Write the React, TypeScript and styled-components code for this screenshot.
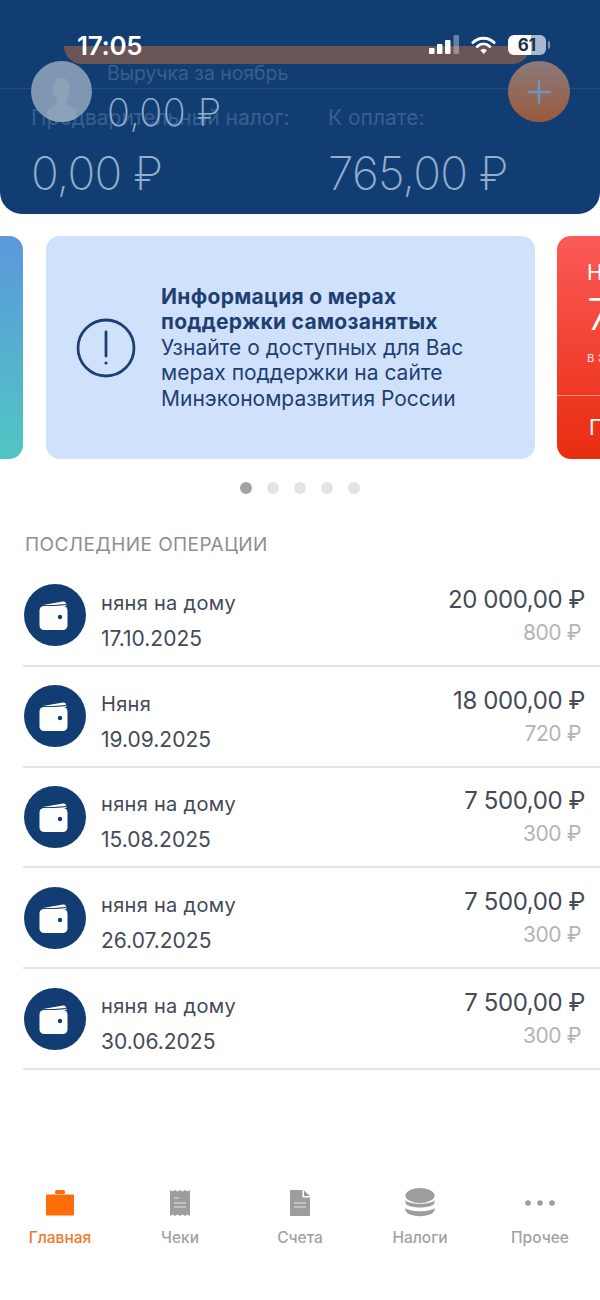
import styled, { createGlobalStyle } from "styled-components";

const GlobalStyle = createGlobalStyle`
  html, body {
    margin: 0;
    padding: 0;
    background: #fff;
    font-family: Inter, "Noto Sans", "DejaVu Sans", sans-serif;
  }
  * { box-sizing: border-box; }
`;

const Screen = styled.div`
  width: 600px;
  height: 1300px;
  display: flex;
  flex-direction: column;
  overflow: hidden;
  background: #fff;
`;

const Header = styled.header`
  position: relative;
  height: 214px;
  flex: none;
  padding: 105px 0 0 31px;
  display: grid;
  grid-template-columns: 297px 1fr;
  background: #123d73;
  border-radius: 0 0 22px 22px;
  overflow: hidden;
`;

const SummaryLabel = styled.div`
  font-size: 21px;
  line-height: 26px;
  color: #37608e;
  white-space: nowrap;
`;

const SummaryValue = styled.div`
  margin-top: 14px;
  font-size: 46px;
  line-height: 56px;
  font-weight: 200;
  letter-spacing: -0.8px;
  color: #93adcd;
  white-space: nowrap;
`;

/* island of the phone, showing through the collapsing header */
const IslandShade = styled.div`
  position: absolute;
  left: 64px;
  top: 46px;
  width: 466px;
  height: 18px;
  background: #6a5557;
  border-radius: 0 0 20px 20px;
`;

const Hairline = styled.div`
  position: absolute;
  left: 0;
  right: 0;
  top: 88px;
  height: 1px;
  background: rgba(255, 255, 255, 0.08);
`;

const StatusBar = styled.div`
  position: absolute;
  left: 77px;
  right: 54px;
  top: 30px;
  height: 30px;
  display: flex;
  align-items: center;
  justify-content: space-between;
`;

const Clock = styled.span`
  font-size: 26px;
  font-weight: 600;
  letter-spacing: -0.3px;
  color: #fff;
`;

const StatusIcons = styled.div`
  display: flex;
  align-items: center;
  gap: 12px;
`;

const Battery = styled.div`
  position: relative;
  width: 38px;
  height: 20px;
  border-radius: 6px;
  background: linear-gradient(90deg, #fff 0 61%, #a9b8cf 61% 100%);
  color: #1f2d44;
  font-size: 17px;
  font-weight: 700;
  line-height: 20px;
  text-align: center;

  &::after {
    content: "";
    position: absolute;
    right: -4px;
    top: 6px;
    width: 2px;
    height: 8px;
    border-radius: 0 2px 2px 0;
    background: #7f93ae;
  }
`;

const Avatar = styled.div`
  position: absolute;
  left: 31px;
  top: 61px;
  width: 61px;
  height: 61px;
  border-radius: 50%;
  background: #7f97b2;
  overflow: hidden;
`;

const EarningsBlock = styled.div`
  position: absolute;
  left: 107px;
  top: 60px;
`;

const EarningsLabel = styled.div`
  font-size: 19.4px;
  line-height: 26px;
  color: #37608e;
  white-space: nowrap;
`;

const EarningsValue = styled.div`
  margin-top: 2px;
  font-size: 38px;
  line-height: 48px;
  font-weight: 200;
  letter-spacing: 0.4px;
  color: #93adcd;
  white-space: nowrap;
`;

const AddButton = styled.div`
  position: absolute;
  left: 508px;
  top: 61px;
  width: 62px;
  height: 61px;
  border-radius: 50%;
  background: linear-gradient(180deg, #8a7a7c 0%, #9a5a3b 100%);
  display: flex;
  align-items: center;
  justify-content: center;
`;

const Carousel = styled.section`
  flex: none;
  margin-top: 22px;
  height: 223px;
  display: flex;
  gap: 23px;
`;

const LeftPeek = styled.div`
  width: 23px;
  flex: none;
  border-radius: 0 14px 14px 0;
  background: linear-gradient(180deg, #5b98dc 0%, #4fc6c3 100%);
`;

const InfoCard = styled.div`
  width: 489px;
  flex: none;
  margin-right: -1px;
  display: flex;
  align-items: center;
  gap: 25px;
  padding-left: 30px;
  border-radius: 14px;
  background: #d0e2fb;
`;

const InfoText = styled.div`
  font-size: 21px;
  line-height: 25.5px;
  color: #1f3f73;
  white-space: nowrap;
`;

const InfoTitle = styled.div`
  font-weight: 700;
  letter-spacing: 0.3px;
`;

const RightPeek = styled.div`
  flex: 1;
  min-width: 0;
  display: flex;
  flex-direction: column;
  padding-left: 30px;
  border-radius: 14px 0 0 14px;
  overflow: hidden;
  background: linear-gradient(180deg, #fb5a57 0%, #e92c10 100%);
  color: #fff;
  white-space: nowrap;
`;

const PeekTitle = styled.div`
  margin-top: 24px;
  font-size: 21px;
  line-height: 26px;
`;

const PeekAmount = styled.div`
  margin-top: 1px;
  font-size: 44px;
  line-height: 54px;
  font-weight: 300;
`;

const PeekNote = styled.div`
  margin-top: 7px;
  font-size: 13px;
  line-height: 18px;
  opacity: 0.85;
`;

const PeekAction = styled.div`
  margin: 29px 0 0 -30px;
  padding: 19px 0 0 32px;
  border-top: 1px solid rgba(255, 255, 255, 0.4);
  font-size: 21px;
  line-height: 26px;
`;

const Dots = styled.div`
  flex: none;
  margin-top: 23px;
  display: flex;
  justify-content: center;
  gap: 15px;
`;

const Dot = styled.span<{ $active?: boolean }>`
  width: 12px;
  height: 12px;
  border-radius: 50%;
  background: ${(props) => (props.$active ? "#a2a2a4" : "#e3e3e5")};
`;

const SectionTitle = styled.h2`
  margin: 39px 0 0 25px;
  font-size: 19px;
  line-height: 24px;
  font-weight: 400;
  letter-spacing: 0.42px;
  color: #8e8e93;
`;

const OperationList = styled.div`
  margin-top: 9px;
  margin-left: 23px;
`;

const OperationRow = styled.div`
  height: 100.8px;
  display: flex;
  align-items: center;
  gap: 15px;
  padding: 0 15px 0 1px;
  border-bottom: 2px solid #e4e4e6;
`;

const OperationInfo = styled.div`
  flex: 1;
  margin-top: 11px;
  display: flex;
  flex-direction: column;
  gap: 10px;
  color: #434b57;
`;

const OperationName = styled.div`
  font-size: 20px;
  line-height: 26px;
  letter-spacing: 0.3px;
`;

const OperationDate = styled.div`
  font-size: 21px;
  line-height: 26px;
`;

const OperationSums = styled.div`
  margin-top: 2px;
  display: flex;
  flex-direction: column;
  align-items: flex-end;
  gap: 3px;
`;

const Amount = styled.div`
  font-size: 24px;
  line-height: 30px;
  letter-spacing: -0.4px;
  color: #434b57;
`;

const TaxAmount = styled.div`
  padding-right: 4px;
  font-size: 21px;
  line-height: 30px;
  letter-spacing: -0.4px;
  color: #b4b4b6;
`;

const TabBar = styled.nav`
  margin-top: auto;
  height: 128px;
  flex: none;
  display: grid;
  grid-template-columns: repeat(5, 1fr);
`;

const Tab = styled.div<{ $active?: boolean }>`
  display: flex;
  flex-direction: column;
  align-items: center;
  padding-top: 14px;
  font-size: 15.5px;
  line-height: 20px;
  font-weight: 500;
  color: ${(props) => (props.$active ? "#ef7a2c" : "#a2a2a4")};
`;

const TabIcon = styled.div`
  height: 34px;
  margin-bottom: 8px;
  display: flex;
  align-items: center;
  justify-content: center;
`;

const operations = [
  { name: "няня на дому", date: "17.10.2025", amount: "20 000,00 ₽", tax: "800 ₽" },
  { name: "Няня", date: "19.09.2025", amount: "18 000,00 ₽", tax: "720 ₽" },
  { name: "няня на дому", date: "15.08.2025", amount: "7 500,00 ₽", tax: "300 ₽" },
  { name: "няня на дому", date: "26.07.2025", amount: "7 500,00 ₽", tax: "300 ₽" },
  { name: "няня на дому", date: "30.06.2025", amount: "7 500,00 ₽", tax: "300 ₽" },
];

function WalletBadge() {
  return (
    <svg width="62" height="62" viewBox="0 0 62 62" style={{ flex: "none" }}>
      <circle cx="31" cy="31" r="31" fill="#123d73" />
      <path d="M19 21 L39 17.500 Q41.500 17 42 19.500 L42.500 22 Z" fill="#fff" />
      <path d="M17 22.500 L42 20.500" stroke="#123d73" strokeWidth="1" />
      <rect x="15.500" y="22" width="28" height="24" rx="4.500" fill="#fff" />
      <circle cx="36" cy="33" r="2.200" fill="#123d73" />
    </svg>
  );
}

function App() {
  return (
    <Screen>
      <GlobalStyle />
      <Header>
        <div>
          <SummaryLabel>Предварительный налог:</SummaryLabel>
          <SummaryValue>0,00 ₽</SummaryValue>
        </div>
        <div>
          <SummaryLabel>К оплате:</SummaryLabel>
          <SummaryValue>765,00 ₽</SummaryValue>
        </div>

        <IslandShade />
        <Hairline />

        <Avatar>
          <svg width="61" height="61" viewBox="0 0 61 61">
            <path
              d="M30.500 17 C37 17 39.500 23 39 29 C38.700 33 36.500 37 35 39 L35.500 43 C38 45 42 47 45 49 L45 61 L16 61 L16 49 C19 47 23 45 25.500 43 L26 39 C24.500 37 22.300 33 22 29 C21.500 23 24 17 30.500 17 Z"
              fill="#8ba3b9"
            />
          </svg>
        </Avatar>

        <EarningsBlock>
          <EarningsLabel>Выручка за ноябрь</EarningsLabel>
          <EarningsValue>0,00 ₽</EarningsValue>
        </EarningsBlock>

        <AddButton>
          <svg width="26" height="26" viewBox="0 0 26 26">
            <path d="M13 1.500 V24.500 M1.500 13 H24.500" stroke="#6f95bf" strokeWidth="2.400" />
          </svg>
        </AddButton>

        <StatusBar>
          <Clock>17:05</Clock>
          <StatusIcons>
            <svg width="30" height="20" viewBox="0 0 30 20">
              <rect x="0" y="13" width="5.500" height="6" rx="1" fill="#fff" />
              <rect x="8" y="9" width="5.500" height="10" rx="1" fill="#fff" />
              <rect x="16" y="5" width="5.500" height="14" rx="1" fill="#fff" />
              <rect x="24.500" y="0" width="5.500" height="19" rx="1" fill="#fff" opacity="0.35" />
            </svg>
            <svg width="25" height="20" viewBox="0 0 26 20" fill="none" stroke="#fff" strokeLinecap="round">
              <path d="M2 7.500 C8 1.500 18 1.500 24 7.500" strokeWidth="3" />
              <path d="M6.500 11.500 C10 8 16 8 19.500 11.500" strokeWidth="3" />
              <path d="M13 18.500 L10.300 15.500 C11.800 14.200 14.200 14.200 15.700 15.500 Z" fill="#fff" strokeWidth="1" />
            </svg>
            <Battery>61</Battery>
          </StatusIcons>
        </StatusBar>
      </Header>

      <Carousel>
        <LeftPeek />
        <InfoCard>
          <svg width="60" height="60" viewBox="0 0 60 60" fill="none" stroke="#1f3f73" strokeWidth="2.800" style={{ flex: "none" }}>
            <circle cx="30" cy="30" r="28" />
            <path d="M30 14 V38" strokeLinecap="round" />
            <circle cx="30" cy="45" r="1.600" fill="#1f3f73" stroke="none" />
          </svg>
          <InfoText>
            <InfoTitle>
              Информация о мерах
              <br />
              поддержки самозанятых
            </InfoTitle>
            Узнайте о доступных для Вас
            <br />
            мерах поддержки на сайте
            <br />
            Минэкономразвития России
          </InfoText>
        </InfoCard>
        <RightPeek>
          <PeekTitle>Налог</PeekTitle>
          <PeekAmount>765,00 ₽</PeekAmount>
          <PeekNote>в этом месяце</PeekNote>
          <PeekAction>Перейти</PeekAction>
        </RightPeek>
      </Carousel>

      <Dots>
        <Dot $active />
        <Dot />
        <Dot />
        <Dot />
        <Dot />
      </Dots>

      <SectionTitle>ПОСЛЕДНИЕ ОПЕРАЦИИ</SectionTitle>

      <OperationList>
        {operations.map((op) => (
          <OperationRow key={op.date}>
            <WalletBadge />
            <OperationInfo>
              <OperationName>{op.name}</OperationName>
              <OperationDate>{op.date}</OperationDate>
            </OperationInfo>
            <OperationSums>
              <Amount>{op.amount}</Amount>
              <TaxAmount>{op.tax}</TaxAmount>
            </OperationSums>
          </OperationRow>
        ))}
      </OperationList>

      <TabBar>
        <Tab $active>
          <TabIcon>
            <svg width="30" height="26" viewBox="0 0 30 26" fill="#ff6d0a">
              <rect x="10" y="0" width="10" height="4" rx="1.500" />
              <rect x="1" y="4.500" width="28" height="21" rx="1" />
            </svg>
          </TabIcon>
          Главная
        </Tab>
        <Tab>
          <TabIcon>
            <svg width="20" height="26" viewBox="0 0 20 26">
              <path
                d="M0 0 L2.500 1.500 L5 0 L7.500 1.500 L10 0 L12.500 1.500 L15 0 L17.500 1.500 L20 0 V26 L17.500 24.500 L15 26 L12.500 24.500 L10 26 L7.500 24.500 L5 26 L2.500 24.500 L0 26 Z"
                fill="#9d9d9f"
              />
              <path d="M4 8 H9 M4 13 H16 M4 17 H16" stroke="#e6e6e6" strokeWidth="1.200" />
            </svg>
          </TabIcon>
          Чеки
        </Tab>
        <Tab>
          <TabIcon>
            <svg width="20" height="26" viewBox="0 0 20 26">
              <path d="M1 0 H12.500 V7.500 H20 V25 Q20 26 19 26 H1 Q0 26 0 25 V1 Q0 0 1 0 Z" fill="#9d9d9f" />
              <path d="M14 0.500 L20 6 H14 Z" fill="#9d9d9f" />
              <path d="M4 13 H16 M4 17 H16" stroke="#e6e6e6" strokeWidth="1.200" />
            </svg>
          </TabIcon>
          Счета
        </Tab>
        <Tab>
          <TabIcon>
            <svg width="30" height="30" viewBox="0 0 30 30" fill="#9d9d9f">
              <ellipse cx="15" cy="7.500" rx="14.500" ry="7.500" />
              <path d="M0.500 12 C3 17 27 17 29.500 12 V15 C27 21 3 21 0.500 15 Z" />
              <path d="M0.500 19.500 C3 24.500 27 24.500 29.500 19.500 V22.500 C27 30 3 30 0.500 22.500 Z" />
            </svg>
          </TabIcon>
          Налоги
        </Tab>
        <Tab>
          <TabIcon>
            <svg width="32" height="8" viewBox="0 0 32 8" fill="#9d9d9f">
              <circle cx="4" cy="4" r="2.800" />
              <circle cx="16" cy="4" r="2.800" />
              <circle cx="28" cy="4" r="2.800" />
            </svg>
          </TabIcon>
          Прочее
        </Tab>
      </TabBar>
    </Screen>
  );
}

export default App;
